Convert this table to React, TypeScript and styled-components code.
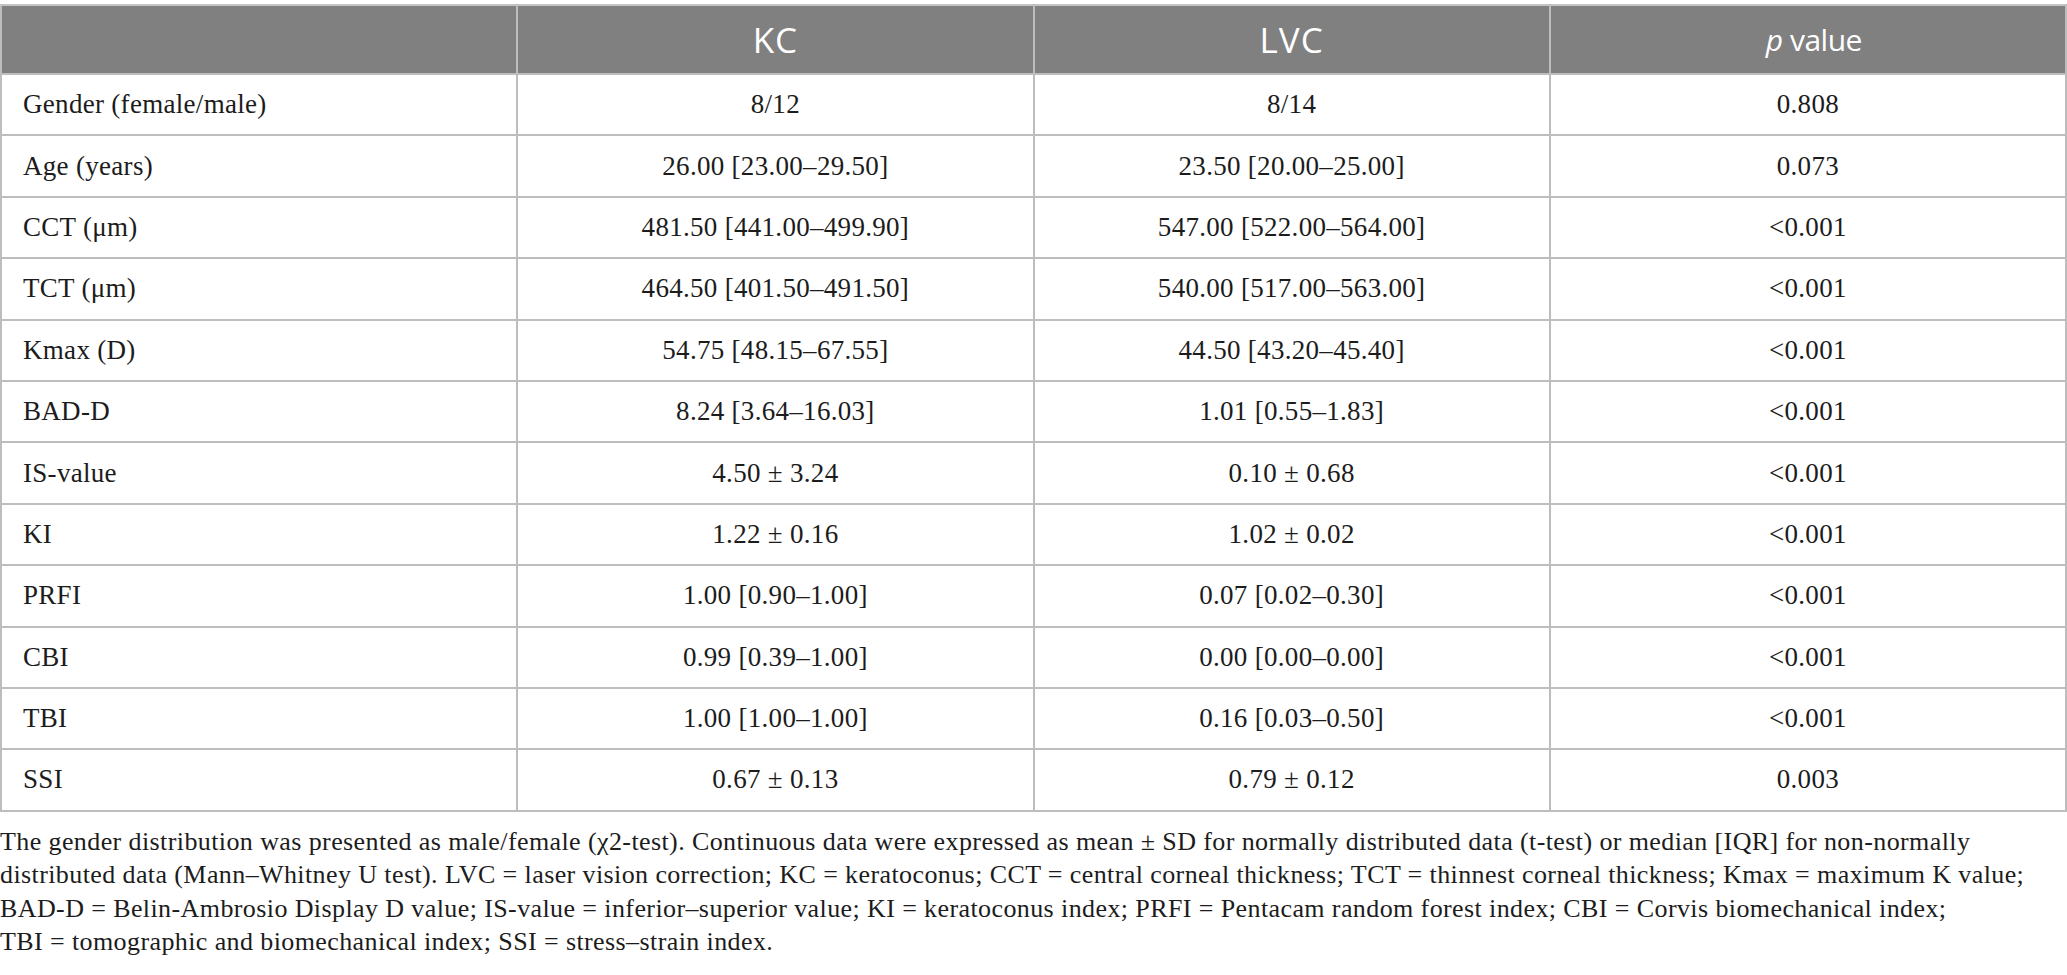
import React from 'react';
import styled, {createGlobalStyle} from "styled-components";

const rows: [string, string, string, string][] = [
    ['Gender (female/male)', '8/12', '8/14', '0.808'],
    ['Age (years)', '26.00 [23.00–29.50]', '23.50 [20.00–25.00]', '0.073'],
    ['CCT (μm)', '481.50 [441.00–499.90]', '547.00 [522.00–564.00]', '<0.001'],
    ['TCT (μm)', '464.50 [401.50–491.50]', '540.00 [517.00–563.00]', '<0.001'],
    ['Kmax (D)', '54.75 [48.15–67.55]', '44.50 [43.20–45.40]', '<0.001'],
    ['BAD-D', '8.24 [3.64–16.03]', '1.01 [0.55–1.83]', '<0.001'],
    ['IS-value', '4.50 ± 3.24', '0.10 ± 0.68', '<0.001'],
    ['KI', '1.22 ± 0.16', '1.02 ± 0.02', '<0.001'],
    ['PRFI', '1.00 [0.90–1.00]', '0.07 [0.02–0.30]', '<0.001'],
    ['CBI', '0.99 [0.39–1.00]', '0.00 [0.00–0.00]', '<0.001'],
    ['TBI', '1.00 [1.00–1.00]', '0.16 [0.03–0.50]', '<0.001'],
    ['SSI', '0.67 ± 0.13', '0.79 ± 0.12', '0.003'],
];

const captionLines = [
    'The gender distribution was presented as male/female (χ2-test). Continuous data were expressed as mean ± SD for normally distributed data (t-test) or median [IQR] for non-normally',
    'distributed data (Mann–Whitney U test). LVC = laser vision correction; KC = keratoconus; CCT = central corneal thickness; TCT = thinnest corneal thickness; Kmax = maximum K value;',
    'BAD-D = Belin-Ambrosio Display D value; IS-value = inferior–superior value; KI = keratoconus index; PRFI = Pentacam random forest index; CBI = Corvis biomechanical index;',
    'TBI = tomographic and biomechanical index; SSI = stress–strain index.',
];

export default function App() {
    return (
        <Page>
            <GlobalStyle />
            <Table>
                <colgroup>
                    <col style={{width: '25%'}} />
                    <col style={{width: '25%'}} />
                    <col style={{width: '25%'}} />
                    <col style={{width: '25%'}} />
                </colgroup>
                <thead>
                    <tr>
                        <HeadCell />
                        <HeadCell $caps>KC</HeadCell>
                        <HeadCell $caps>LVC</HeadCell>
                        <HeadCell><i>p</i> value</HeadCell>
                    </tr>
                </thead>
                <tbody>
                    {rows.map(r => (
                        <tr key={r[0]}>
                            <Cell $first>{r[0]}</Cell>
                            <Cell>{r[1]}</Cell>
                            <Cell>{r[2]}</Cell>
                            <Cell>{r[3]}</Cell>
                        </tr>
                    ))}
                </tbody>
            </Table>
            <Caption>
                {captionLines.map(l => <CaptionLine key={l}>{l}</CaptionLine>)}
            </Caption>
        </Page>
    );
}

const GlobalStyle = createGlobalStyle`
    html, body {
        margin: 0;
        padding: 0;
        background: #fff;
    }
`

const Page = styled.div`
    width: 2067px;
    padding-top: 4px;
    display: flex;
    flex-direction: column;
    font-family: "Liberation Serif", "Times New Roman", serif;
    color: #1c1c1c;
`

const Table = styled.table`
    width: 100%;
    border-collapse: collapse;
    table-layout: fixed;
`

const HeadCell = styled.th<{$caps?: boolean}>`
    height: 67px;
    padding: 0;
    background: #808080;
    color: #fff;
    font-family: "Open Sans", "Liberation Sans", sans-serif;
    font-weight: 400;
    font-size: ${p => p.$caps ? '35px' : '30px'};
    letter-spacing: ${p => p.$caps ? '1px' : '-0.5px'};
    text-align: center;
    border: 2px solid #bdbdbd;
    border-top-color: #c4c4c4;
    & i {
        margin-left: 12px;
    }
`

const Cell = styled.td<{$first?: boolean}>`
    height: 59.4px;
    padding: 0;
    padding-left: ${p => p.$first ? '21px' : '0'};
    font-size: 27px;
    letter-spacing: 0.3px;
    text-align: ${p => p.$first ? 'left' : 'center'};
    border: 2px solid #bdbdbd;
    white-space: nowrap;
`

const Caption = styled.div`
    margin-top: 13px;
    display: flex;
    flex-direction: column;
    font-size: 26px;
    letter-spacing: 0.4px;
    line-height: 33.5px;
`

const CaptionLine = styled.div`
    white-space: nowrap;
`
